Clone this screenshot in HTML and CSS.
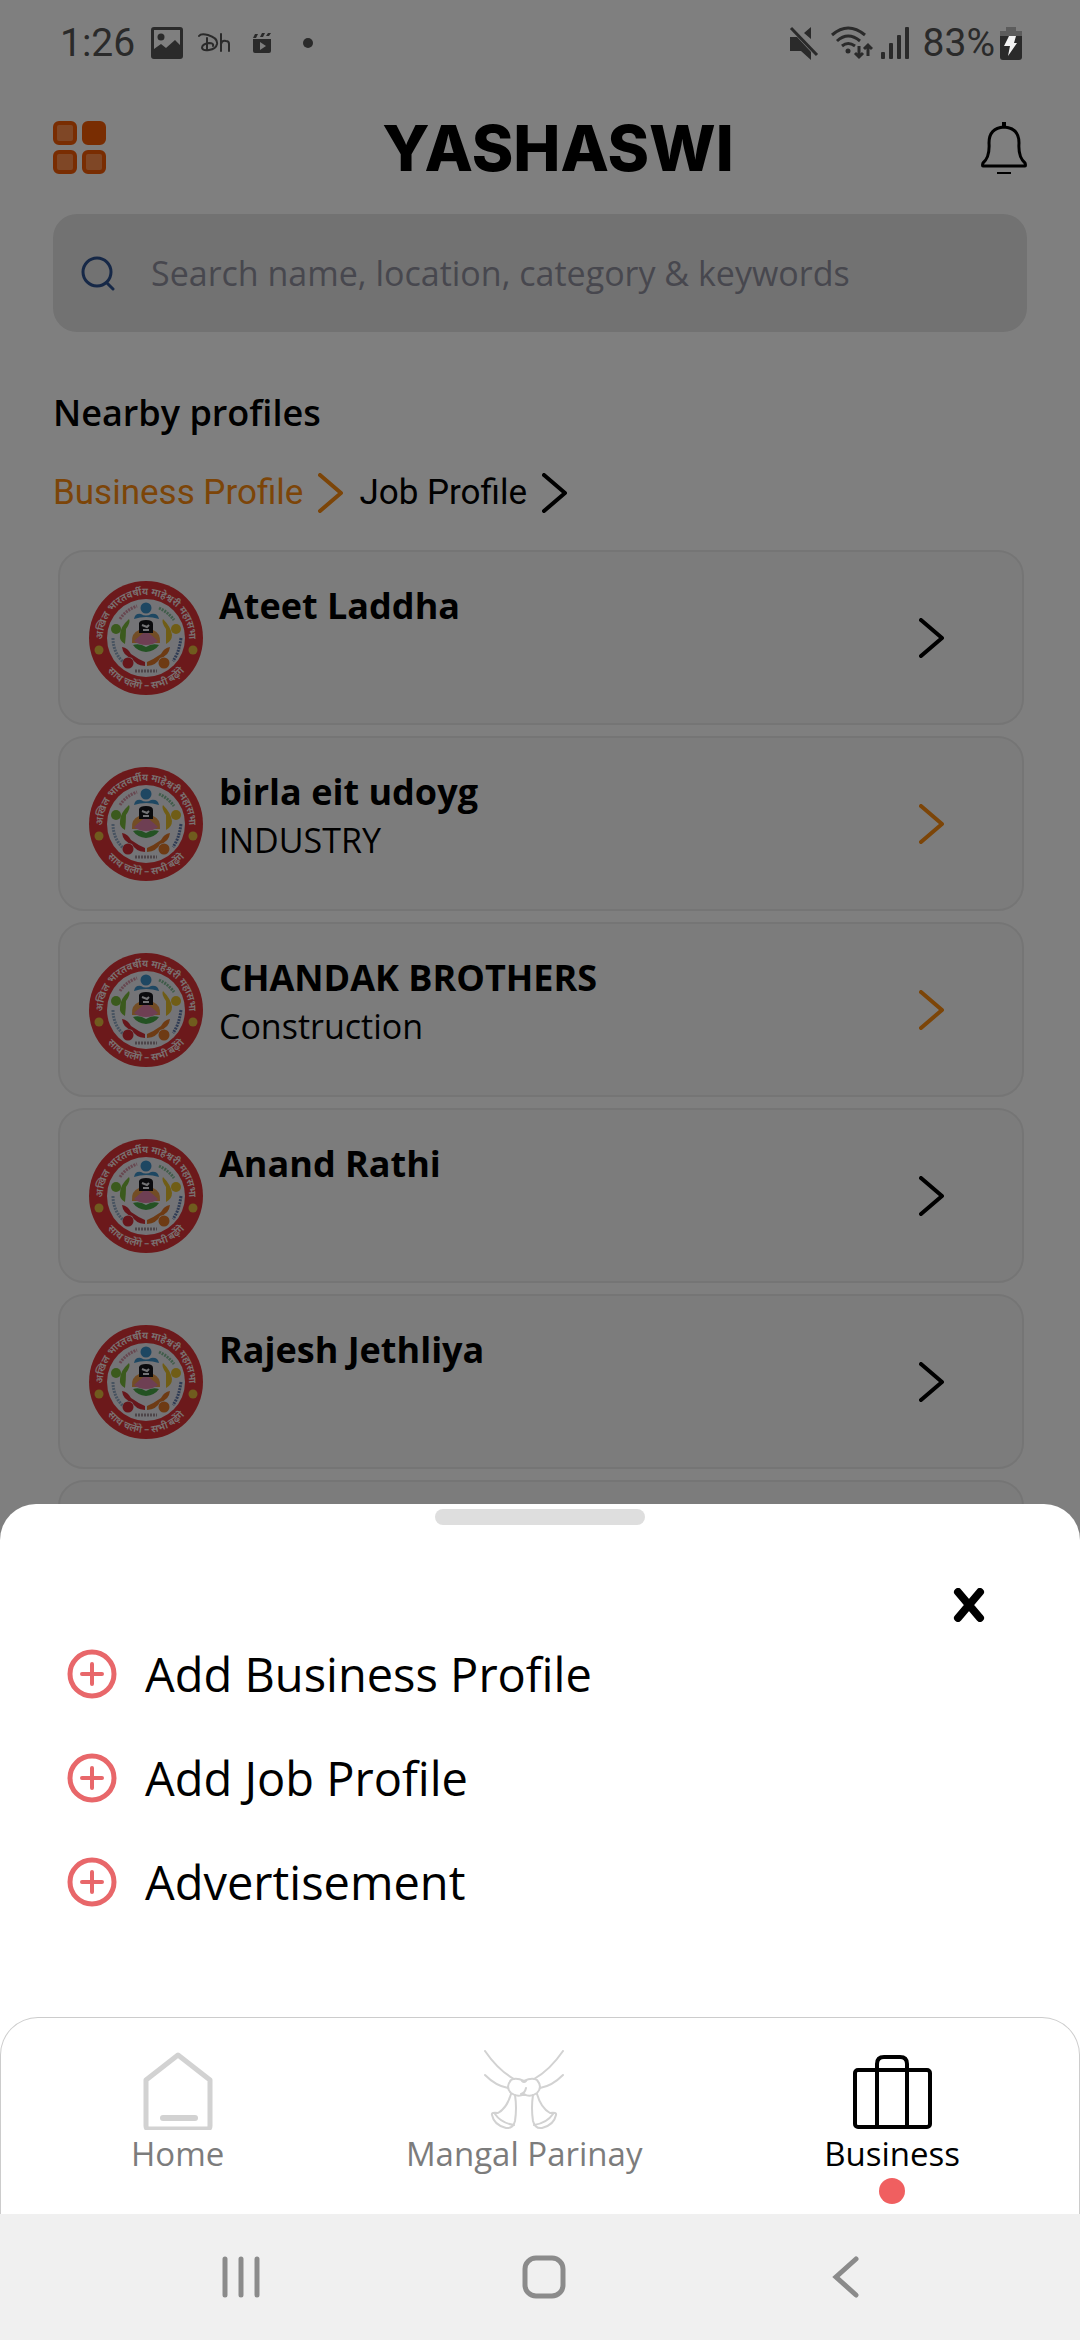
FILE: index.html
```html
<!DOCTYPE html>
<html lang="en">
<head>
  <meta charset="UTF-8" />
  <meta name="viewport" content="width=device-width, initial-scale=1.0" />
  <title>Yashaswi</title>
  <link rel="stylesheet" href="styles.css">
</head>
<body>
  <!-- shared icons -->
  <svg class="sprite" aria-hidden="true">
    <symbol id="chevron" viewBox="0 0 26 40">
      <path d="M2 2 L23 20 L2 38" fill="none" stroke="currentColor" stroke-width="4" stroke-linecap="round" stroke-linejoin="round" />
    </symbol>
    <symbol id="plus" viewBox="0 0 50 50">
      <circle cx="25" cy="25" r="22" fill="none" stroke="currentColor" stroke-width="5" />
      <path d="M25 15v20M15 25h20" stroke="currentColor" stroke-width="4" stroke-linecap="round" />
    </symbol>
    <symbol id="emblem" viewBox="0 0 114 114">
      <path id="arc-top" d="M16 70 A43 43 0 1 1 98 70" fill="none" />
      <path id="arc-bottom" d="M8 71 A51 51 0 0 0 106 71" fill="none" />
      <circle cx="57" cy="57" r="57" fill="#d93236" />
      <circle cx="57" cy="57" r="39" fill="#e8e8ee" />
      <text class="ring-text"><textPath href="#arc-top" startOffset="50%" text-anchor="middle">अखिल भारतवर्षीय माहेश्वरी महासभा</textPath></text>
      <text class="ring-text"><textPath href="#arc-bottom" startOffset="50%" text-anchor="middle">साथ चलेंगे – सभी बढ़ेंगे</textPath></text>
      <circle cx="10" cy="69" r="4.500" fill="#e0b83c" />
      <circle cx="104" cy="69" r="4.500" fill="#e0b83c" />
      <g fill="#3d8fc4">
        <circle cx="57" cy="27" r="5.500" />
        <path d="M45 38 Q46 32 52 33 Q57 36 62 33 Q69 32 70 38 Q57 34 45 38z" />
      </g>
      <g fill="#77b43a">
        <circle cx="27" cy="48" r="5" />
        <path d="M40 38 Q42 41 37 48 Q37 55 36 63 Q30 60 31 54 Q31 46 40 38z" />
      </g>
      <g fill="#e0bb2c">
        <circle cx="87" cy="48" r="5" />
        <path d="M74 38 Q72 41 77 48 Q77 55 77 63 Q83 60 83 54 Q82 46 74 38z" />
      </g>
      <g fill="#cf2d36">
        <circle cx="39" cy="82" r="5.500" />
        <path d="M33 66 Q39 67 42 73 Q49 78 56 81 L56 85 Q46 84 43 77 Q34 75 33 66z" />
      </g>
      <g fill="#dc7628">
        <circle cx="75" cy="82" r="5.500" />
        <path d="M81 66 Q75 67 72 73 Q65 78 58 81 L58 85 Q68 84 71 77 Q80 75 81 66z" />
      </g>
      <path d="M43 62 Q42 52 50 49 L64 49 Q72 52 71 62z" fill="#e69a4a" />
      <path d="M57 50 Q65 56 69 60 Q64 64 57 64 Q50 64 45 60 Q49 56 57 50z" fill="#dc7fa6" />
      <path d="M44 64 Q51 62 57 66 Q63 62 70 64 Q66 70 57 71 Q48 70 44 64z" fill="#49a447" />
      <path d="M50 52 L50 42 Q51 39 57 39 Q64 39 64 43 L64 52z" fill="#15151a" />
      <path d="M53 44l5 2 2-2M54 49h6" stroke="#e8e8ee" stroke-width="2" fill="none" />
      <g fill="none" stroke-width="3" stroke-dasharray="2 1">
        <path d="M31 38 Q37 29 48 25" stroke="#cf8fa0" />
        <path d="M70 27 Q79 31 85 39" stroke="#80b894" />
        <path d="M24 57 Q24 71 34 81" stroke="#8fa6c0" />
        <path d="M92 57 Q90 72 84 80" stroke="#5f77a8" />
        <path d="M46 90h22" stroke="#9a8b93" />
      </g>
    </symbol>
  </svg>

  <div class="phone">
    <div class="page">
      <div class="status-bar">
        <span class="clock">1:26</span>
        <svg class="status-picture" viewBox="0 0 32 32"><path fill="currentColor" fill-rule="evenodd" d="M3 0h26q3 0 3 3v26q0 3-3 3H3q-3 0-3-3V3q0-3 3-3zM3 3v19l7-5 5 4 9-8 5 5V3z"/><circle cx="10" cy="10" r="3.500" fill="currentColor"/></svg>
        <svg class="status-dh" viewBox="0 0 32 20" fill="none" stroke="currentColor" stroke-width="2" stroke-linecap="round"><path d="M1 3Q3 0 10 2Q20 5 19 11Q18 16 11 17Q5 18 4 15Q4 11 11 10Q16 10 15 13M9 5v12M23 1v17M23 11Q24 7 28 8Q31 8 31 11V18"/></svg>
        <svg class="status-clip" viewBox="0 0 18 20" fill="currentColor"><path fill-rule="evenodd" d="M0 6h18v12q0 2-2 2H2q-2 0-2-2zM7 9v8l6-4z"/><path d="M0 5l2-4h3L3 5zM7 4l2-4h3l-2 4zM13 3l2-3h3l-2 3z"/></svg>
        <span class="status-dot"></span>
        <svg class="status-mute" viewBox="0 0 30 34" fill="currentColor"><path d="M1 11h7l14 15v8l-10-9H1zM22 1v12l-7-6z"/><path d="M2 2l26 27" stroke="currentColor" stroke-width="3" fill="none"/></svg>
        <svg class="status-wifi" viewBox="0 0 42 34" fill="none" stroke="currentColor" stroke-width="3"><path d="M1 9Q17-5 34 9M6 15Q17 5 29 15M11 20Q17 15 24 20"/><circle cx="17" cy="25" r="2.500" fill="currentColor" stroke="none"/><path d="M28 20v11M24 27l4 4 4-4M37 30V20M33 23l4-4 4 4"/></svg>
        <svg class="status-signal" viewBox="0 0 28 32" fill="currentColor"><rect y="25" width="4" height="7" rx="1"/><rect x="8" y="16" width="4" height="16" rx="1"/><rect x="16" y="8" width="4" height="24" rx="1"/><rect x="24" width="4" height="32" rx="1"/></svg>
        <span class="percent">83%</span>
        <svg class="status-battery" viewBox="0 0 22 33"><path d="M6 0h10v4h6v6H0V4h6z" fill="#5c5c5c"/><path d="M0 9h22v21q0 3-3 3H3q-3 0-3-3z" fill="currentColor"/><path d="M9 9h7l-2 7h3L8 29l2-10H4z" fill="#f2f2f2"/></svg>
      </div>

      <header class="header">
        <button class="icon-btn" aria-label="Menu">
          <svg class="menu-icon" viewBox="0 0 54 54" fill="#ff8f4d" stroke="#f25a05" stroke-width="4">
            <rect x="2" y="2" width="20" height="20" rx="4" />
            <rect x="31" y="2" width="20" height="20" rx="4" fill="#f25a05" />
            <rect x="2" y="31" width="20" height="20" rx="4" />
            <rect x="31" y="31" width="20" height="20" rx="4" />
          </svg>
        </button>
        <h1>YASHASWI</h1>
        <button class="icon-btn" aria-label="Notifications">
          <svg class="bell-icon" viewBox="0 0 46 52" fill="none" stroke="#000" stroke-width="3">
            <path d="M23 5Q8 6 8 21Q9 35 2 41Q1 44 2 44H44Q45 44 44 41Q37 35 38 21Q38 6 23 5z" stroke-linejoin="round" />
            <path d="M23 0v5" stroke-width="4" />
            <path d="M16 51h14" stroke-width="2" />
          </svg>
        </button>
      </header>

      <label class="search">
        <svg class="search-icon" viewBox="0 0 34 36" fill="none" stroke="#2c508e" stroke-width="3" stroke-linecap="round"><circle cx="16" cy="17" r="14" /><path d="M26 28l6 6" /></svg>
        <input type="text" placeholder="Search name, location, category &amp; keywords" aria-label="Search" />
      </label>

      <h2>Nearby profiles</h2>
      <div class="filters">
        <a href="#business" class="active">Business Profile <svg class="chevron"><use href="#chevron" /></svg></a>
        <a href="#job">Job Profile <svg class="chevron"><use href="#chevron" /></svg></a>
      </div>

      <ul class="profiles">
        <li class="card">
          <svg class="emblem"><use href="#emblem" /></svg>
          <div class="info"><h3>Ateet Laddha</h3></div>
          <svg class="chevron"><use href="#chevron" /></svg>
        </li>
        <li class="card">
          <svg class="emblem"><use href="#emblem" /></svg>
          <div class="info"><h3>birla eit udoyg</h3><p>INDUSTRY</p></div>
          <svg class="chevron orange"><use href="#chevron" /></svg>
        </li>
        <li class="card">
          <svg class="emblem"><use href="#emblem" /></svg>
          <div class="info"><h3>CHANDAK BROTHERS</h3><p>Construction</p></div>
          <svg class="chevron orange"><use href="#chevron" /></svg>
        </li>
        <li class="card">
          <svg class="emblem"><use href="#emblem" /></svg>
          <div class="info"><h3>Anand Rathi</h3></div>
          <svg class="chevron"><use href="#chevron" /></svg>
        </li>
        <li class="card">
          <svg class="emblem"><use href="#emblem" /></svg>
          <div class="info"><h3>Rajesh Jethliya</h3></div>
          <svg class="chevron"><use href="#chevron" /></svg>
        </li>
        <li class="card"></li>
      </ul>

      <div class="scrim"></div>

      <section class="sheet" role="dialog" aria-label="Add">
        <div class="handle"></div>
        <button class="close" aria-label="Close">
          <svg viewBox="0 0 32 34"><path d="M5 4l22 26M27 4L5 30" stroke="#000" stroke-width="8" stroke-linecap="round" /></svg>
        </button>
        <button class="option"><svg><use href="#plus" /></svg>Add Business Profile</button>
        <button class="option"><svg><use href="#plus" /></svg>Add Job Profile</button>
        <button class="option"><svg><use href="#plus" /></svg>Advertisement</button>
      </section>
    </div>

    <nav class="tabs">
      <a href="#home">
        <svg viewBox="0 0 80 80" fill="none" stroke="#d2d2d2" stroke-width="4" stroke-linejoin="round"><path d="M40 5L72 30V76Q72 79 69 79H11Q8 79 8 76V30z" stroke-width="5" /><path d="M25 68h32" stroke-width="6" stroke-linecap="round" /></svg>
        Home
      </a>
      <a href="#mangal">
        <svg viewBox="0 0 80 80" fill="none" stroke="#d2d2d2" stroke-width="2" stroke-linecap="round">
          <path d="M1 1Q14 20 30 29M79 1Q66 20 50 29M1 25Q12 36 24 38M79 25Q68 36 56 38" />
          <path d="M40 31Q32 27 27 30Q21 37 27 43Q34 48 40 44Q46 48 53 43Q59 37 53 30Q48 27 40 31zM38 31q2 2 4 0M42 38q-1 5-5 6" />
          <path d="M27 44Q23 58 14 63Q7 62 8 65Q10 75 22 78Q29 79 31 71Q33 58 31 45M11 64Q17 73 30 75" />
          <path d="M53 44Q57 58 66 63Q73 62 72 65Q70 75 58 78Q51 79 49 71Q47 58 49 45M69 64Q63 73 50 75" />
        </svg>
        Mangal Parinay
      </a>
      <a href="#business-tab" class="current">
        <svg viewBox="0 0 80 80" fill="none" stroke="#000" stroke-width="4"><rect x="3" y="20" width="75" height="57" rx="3" /><path d="M25 77V14Q25 7 32 7H48Q55 7 55 14V77" /></svg>
        Business
      </a>
    </nav>

    <div class="system-bar">
      <button aria-label="Recents"><svg viewBox="0 0 44 44"><path d="M6 4v36M22 4v36M38 4v36" /></svg></button>
      <button aria-label="Home"><svg viewBox="0 0 44 44"><rect x="3" y="3" width="38" height="38" rx="11" /></svg></button>
      <button aria-label="Back"><svg viewBox="0 0 44 44"><path d="M32 4L12 22l20 18" /></svg></button>
    </div>
  </div>
</body>
</html>
```

FILE: styles.css
```css
* {
  box-sizing: border-box;
}
body {
  margin: 0;
  background-color: #fff;
  color: #000;
  font-family: "Open Sans", "Noto Sans", sans-serif;
}
h1, h2, h3, p, ul {
  margin: 0;
  padding: 0;
}
button {
  background: none;
  border: none;
  padding: 0;
  color: inherit;
  font-family: inherit;
  cursor: pointer;
}
a {
  color: inherit;
  text-decoration: none;
}
svg {
  display: block;
  flex-shrink: 0;
}
.sprite {
  position: absolute;
  width: 0;
  height: 0;
}
.phone {
  display: flex;
  flex-direction: column;
  height: 100vh;
}
.page {
  position: relative;
  flex: 1;
  min-height: 0;
  overflow: hidden;
}

/* status bar stays above the scrim */
.status-bar {
  position: relative;
  z-index: 2;
  display: flex;
  align-items: center;
  height: 86px;
  padding: 0 58px 0 60px;
  color: #2a2a2a;
  font-family: Roboto, sans-serif;
  font-size: 39px;
}
.status-picture {
  width: 32px;
  height: 32px;
  margin-left: 16px;
}
.status-dh {
  width: 32px;
  height: 20px;
  margin-left: 15px;
}
.status-clip {
  width: 18px;
  height: 20px;
  margin-left: 23px;
}
.status-dot {
  width: 10px;
  height: 10px;
  margin-left: 32px;
  margin-right: auto;
  border-radius: 50%;
  background-color: #2a2a2a;
}
.status-mute {
  width: 30px;
  height: 34px;
}
.status-wifi {
  width: 42px;
  height: 34px;
  margin-left: 12px;
}
.status-signal {
  width: 28px;
  height: 32px;
  margin-left: 8px;
}
.percent {
  margin-left: 14px;
}
.status-battery {
  width: 22px;
  height: 33px;
  margin-left: 5px;
}

.header {
  display: flex;
  align-items: center;
  justify-content: space-between;
  height: 128px;
  padding: 0 53px 4px;
}
.header h1 {
  margin-left: 28px;
  font-family: Inter, sans-serif;
  font-size: 63px;
  font-weight: 800;
  line-height: 72px;
}
.menu-icon {
  width: 54px;
  height: 54px;
}
.bell-icon {
  width: 46px;
  height: 52px;
}

.search {
  display: flex;
  align-items: center;
  height: 118px;
  margin: 0 53px;
  padding: 0 28px;
  border-radius: 24px;
  background-color: #e4e4e4;
}
.search-icon {
  width: 34px;
  height: 36px;
}
.search input {
  flex: 1;
  margin-left: 36px;
  padding: 0;
  border: none;
  outline: none;
  background: none;
  font-family: inherit;
  font-size: 34px;
}
.search input::placeholder {
  color: #8f8f9c;
  opacity: 1;
}

h2 {
  margin: 56px 53px 0;
  font-size: 36px;
  font-weight: 600;
  line-height: 50px;
}
.filters {
  display: flex;
  gap: 15px;
  margin: 34px 53px 36px;
  font-family: Roboto, sans-serif;
  font-size: 35px;
  line-height: 42px;
}
.filters a {
  display: flex;
  align-items: center;
  gap: 15px;
}
.filters .active,
.orange {
  color: #f98a10;
}
.chevron {
  width: 26px;
  height: 40px;
}

.profiles {
  display: flex;
  flex-direction: column;
  gap: 11px;
  margin: 0 56px 0 58px;
  list-style: none;
}
.card {
  display: flex;
  align-items: center;
  flex-shrink: 0;
  height: 175px;
  padding: 0 77px 0 29px;
  border: 2px solid #ebebeb;
  border-radius: 26px;
  background-color: #f9f9f9;
}
.emblem {
  width: 114px;
  height: 114px;
}
.ring-text {
  fill: #f3e6e6;
  font-family: "Noto Sans Devanagari", "Noto Sans", sans-serif;
  font-size: 10px;
  font-weight: 600;
}
.info {
  flex: 1;
  align-self: flex-start;
  padding: 30px 0 0 16px;
  font-size: 36px;
  line-height: 48px;
}
.info h3 {
  font-size: 36px;
  font-weight: 700;
}
.info p {
  font-size: 34px;
}

.scrim {
  position: absolute;
  inset: 0;
  background-color: rgba(0, 0, 0, 0.5);
}

.sheet {
  position: absolute;
  left: 0;
  right: 0;
  bottom: 0;
  display: flex;
  flex-direction: column;
  padding: 5px 67px 83px;
  border-radius: 36px 36px 0 0;
  background-color: #fff;
}
.handle {
  align-self: center;
  width: 210px;
  height: 16px;
  border-radius: 8px;
  background-color: #dedede;
}
.close {
  align-self: flex-end;
  margin: 63px 28px 0 0;
}
.close svg {
  width: 32px;
  height: 34px;
}
.option {
  display: flex;
  align-items: center;
  gap: 28px;
  height: 104px;
  font-size: 47px;
  text-align: left;
}
.option svg {
  width: 50px;
  height: 50px;
  color: #e8676a;
}

.tabs {
  display: flex;
  justify-content: space-between;
  height: 197px;
  padding: 32px 119px 0 130px;
  border: 1px solid #ccc;
  border-bottom: none;
  border-radius: 38px 38px 0 0;
  color: #7c7c7c;
  font-size: 33px;
  line-height: 48px;
}
.tabs a {
  display: flex;
  flex-direction: column;
  align-items: center;
}
.tabs svg {
  width: 80px;
  height: 80px;
}
.tabs .current {
  color: #000;
}
.tabs .current::after {
  content: "";
  width: 26px;
  height: 26px;
  border-radius: 50%;
  background-color: #f05f60;
}

.system-bar {
  display: flex;
  align-items: center;
  justify-content: space-between;
  height: 126px;
  padding: 0 212px 0 219px;
  background-color: #f0f0f0;
}
.system-bar svg {
  width: 44px;
  height: 44px;
  fill: none;
  stroke: #8b8b8b;
  stroke-width: 5;
  stroke-linecap: round;
}
```
